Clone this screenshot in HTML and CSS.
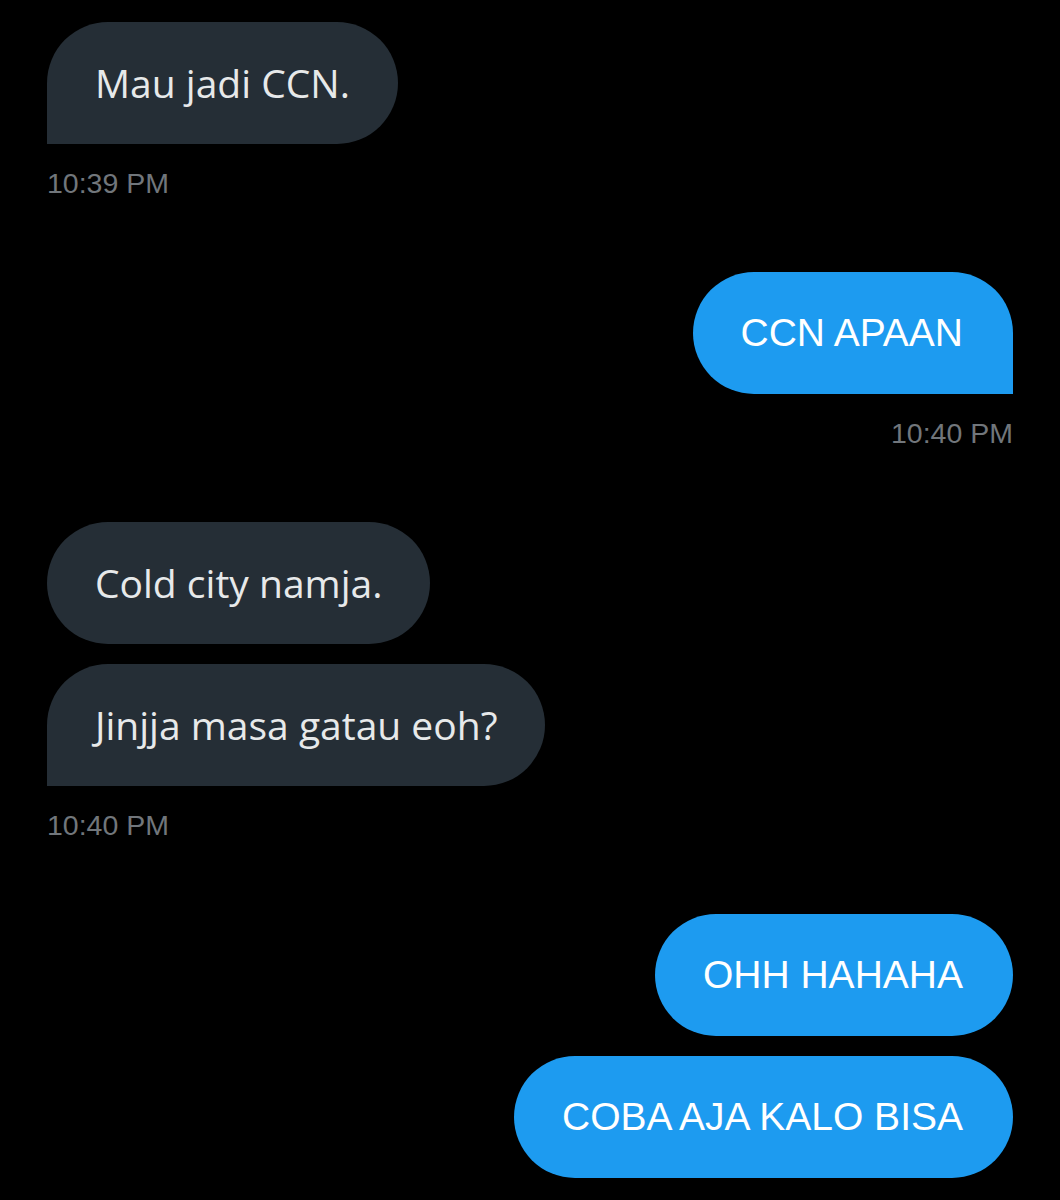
FILE: index.html
```html
<!DOCTYPE html>
<html lang="en">
<head>
  <meta charset="UTF-8" />
  <meta name="viewport" content="width=device-width, initial-scale=1.0"/>
  <title>Messages</title>
  <link rel="stylesheet" href="styles.css">
</head>
<body>
  <div class="chat">
    <!-- Received -->
    <div class="group received">
      <div class="bubble tail">Mau jadi CCN.</div>
      <div class="time">10:39 PM</div>
    </div>

    <!-- Sent -->
    <div class="group sent">
      <div class="bubble tail">CCN APAAN</div>
      <div class="time">10:40 PM</div>
    </div>

    <!-- Received -->
    <div class="group received">
      <div class="bubble">Cold city namja.</div>
      <div class="bubble tail">Jinjja masa gatau eoh?</div>
      <div class="time">10:40 PM</div>
    </div>

    <!-- Sent (still sending) -->
    <div class="group sent">
      <div class="bubble">OHH HAHAHA</div>
      <div class="bubble">COBA AJA KALO BISA</div>
    </div>
  </div>
</body>
</html>
```

FILE: styles.css
```css
/* Reset */
* {
  box-sizing: border-box;
  margin: 0;
  padding: 0;
}
body {
  background-color: #000;
  font-family: "Liberation Sans", Arial, sans-serif;
  width: 1060px;
  height: 1200px;
  overflow: hidden;
}
.chat {
  display: flex;
  flex-direction: column;
  gap: 72px;
  padding: 22px 47px 0 47px;
}
.group {
  display: flex;
  flex-direction: column;
  gap: 20px;
}
.group.received {
  align-items: flex-start;
}
.group.sent {
  align-items: flex-end;
}
.bubble {
  padding: 35px 48px;
  line-height: 52px;
  border-radius: 62px;
  white-space: nowrap;
}
.received .bubble {
  background-color: #252e36;
  color: #e7e9ea;
  font-family: "Open Sans", "Noto Sans", sans-serif;
  font-size: 39px;
}
.sent .bubble {
  background-color: #1d9bf0;
  color: #fff;
  font-size: 39px;
  padding-right: 50px;
}
.received .bubble.tail {
  border-bottom-left-radius: 0;
}
.sent .bubble.tail {
  border-bottom-right-radius: 0;
}
.time {
  margin-top: 2px;
  font-size: 28.5px;
  line-height: 34px;
  color: #71767b;
}
```
